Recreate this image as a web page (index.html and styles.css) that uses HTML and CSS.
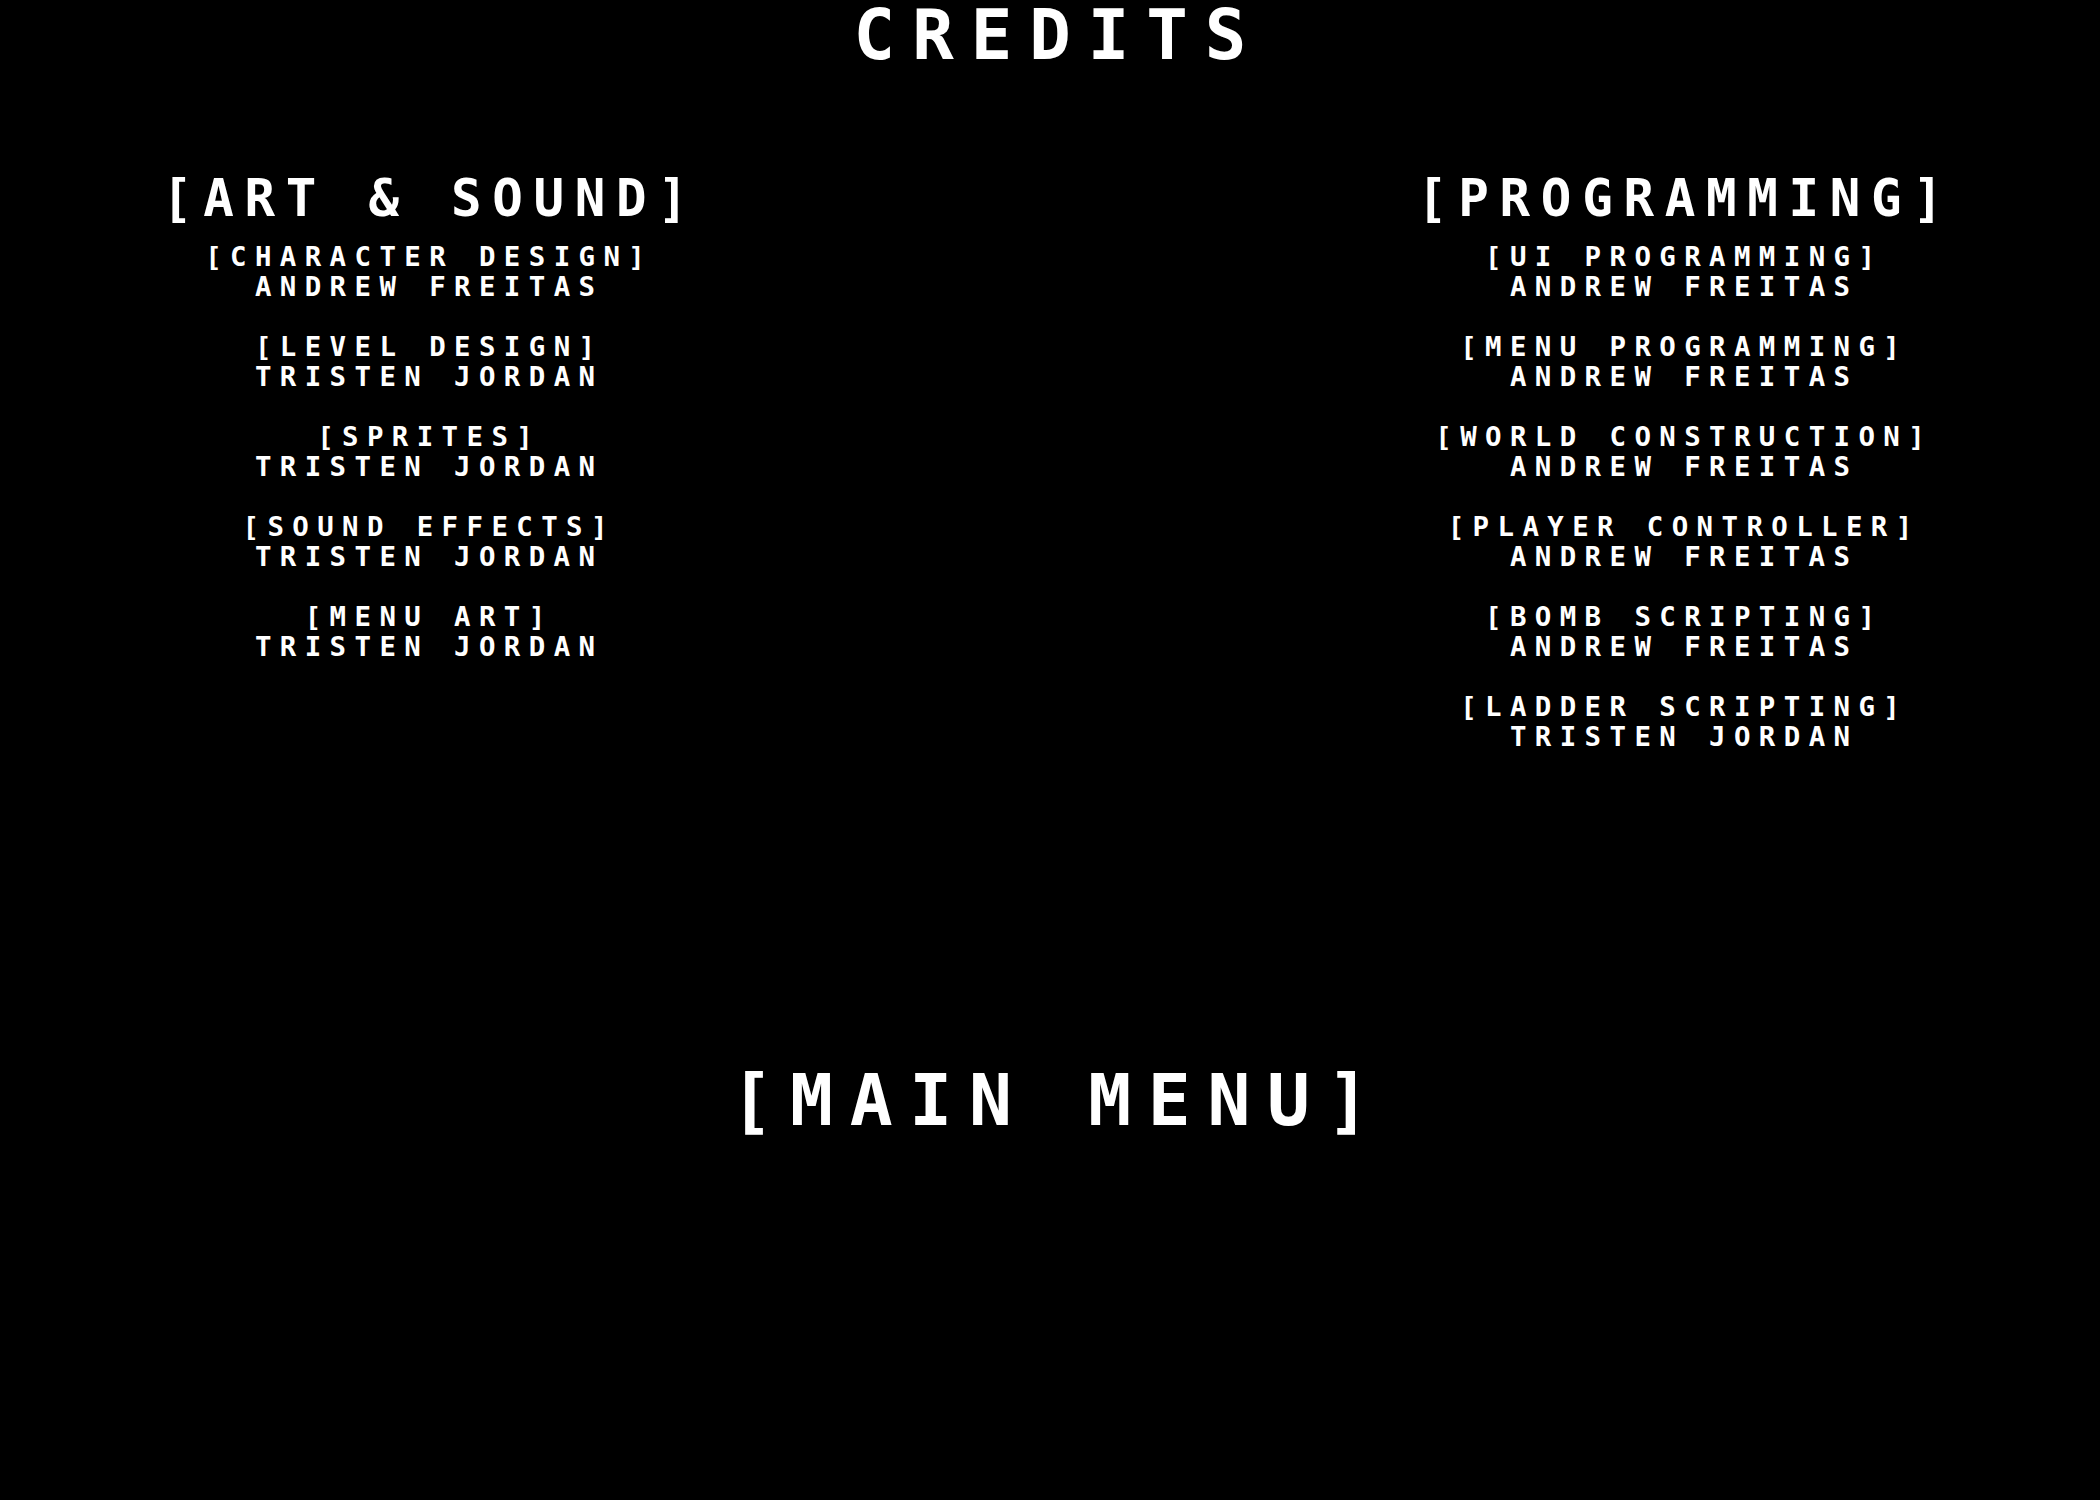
FILE: index.html
```html
<!DOCTYPE html>
<html>
<head>
<meta charset="utf-8">
<title>Credits</title>
<link rel="stylesheet" href="styles.css">
</head>
<body>
<div class="screen">
  <h1 class="title">CREDITS</h1>
  <div class="columns">
    <section class="column">
      <h2 class="section-head">[ART &amp; SOUND]</h2>
      <div class="entries">
        <div class="entry"><div class="role">[CHARACTER DESIGN]</div><div class="name">ANDREW FREITAS</div></div>
        <div class="entry"><div class="role">[LEVEL DESIGN]</div><div class="name">TRISTEN JORDAN</div></div>
        <div class="entry"><div class="role">[SPRITES]</div><div class="name">TRISTEN JORDAN</div></div>
        <div class="entry"><div class="role">[SOUND EFFECTS]</div><div class="name">TRISTEN JORDAN</div></div>
        <div class="entry"><div class="role">[MENU ART]</div><div class="name">TRISTEN JORDAN</div></div>
      </div>
    </section>
    <section class="column">
      <h2 class="section-head">[PROGRAMMING]</h2>
      <div class="entries">
        <div class="entry"><div class="role">[UI PROGRAMMING]</div><div class="name">ANDREW FREITAS</div></div>
        <div class="entry"><div class="role">[MENU PROGRAMMING]</div><div class="name">ANDREW FREITAS</div></div>
        <div class="entry"><div class="role">[WORLD CONSTRUCTION]</div><div class="name">ANDREW FREITAS</div></div>
        <div class="entry"><div class="role">[PLAYER CONTROLLER]</div><div class="name">ANDREW FREITAS</div></div>
        <div class="entry"><div class="role">[BOMB SCRIPTING]</div><div class="name">ANDREW FREITAS</div></div>
        <div class="entry"><div class="role">[LADDER SCRIPTING]</div><div class="name">TRISTEN JORDAN</div></div>
      </div>
    </section>
  </div>
  <div class="menu-row"><button class="menu-button">[MAIN MENU]</button></div>
</div>
</body>
</html>
```

FILE: styles.css
```css
html, body {
  margin: 0;
  padding: 0;
  background: #000;
}

body {
  width: 2100px;
  height: 1500px;
  overflow: hidden;
  color: #fff;
  font-family: "DejaVu Sans Mono", "Liberation Mono", monospace;
  font-weight: bold;
}

.screen {
  display: flex;
  flex-direction: column;
  align-items: stretch;
}

.title {
  margin: 0;
  padding-top: 4px;
  font-size: 69px;
  line-height: 62px;
  letter-spacing: 17px;
  padding-left: 17px;
  text-align: center;
  font-weight: bold;
}

.columns {
  display: flex;
  justify-content: space-between;
  padding-left: 5px;
  margin-top: 108px;
}

.column {
  width: 840px;
  display: flex;
  flex-direction: column;
  align-items: center;
}

.section-head {
  margin: 0;
  font-size: 50.8px;
  line-height: 50px;
  letter-spacing: 10.7px;
  padding-left: 10.7px;
  font-weight: bold;
  text-align: center;
}

.entries {
  margin-top: 18px;
  display: flex;
  flex-direction: column;
  align-items: center;
  gap: 30px;
}

.entry {
  display: flex;
  flex-direction: column;
  align-items: center;
}

.role, .name {
  font-size: 27.4px;
  line-height: 30px;
  letter-spacing: 8.4px;
  padding-left: 8.4px;
  white-space: nowrap;
}

.menu-row {
  display: flex;
  justify-content: center;
  margin-top: 317px;
}

.menu-button {
  background: none;
  border: none;
  color: #fff;
  margin: 0;
  padding: 0 0 0 16.7px;
  font-family: inherit;
  font-weight: bold;
  font-size: 71.3px;
  line-height: 64px;
  letter-spacing: 16.7px;
  cursor: pointer;
}
```
